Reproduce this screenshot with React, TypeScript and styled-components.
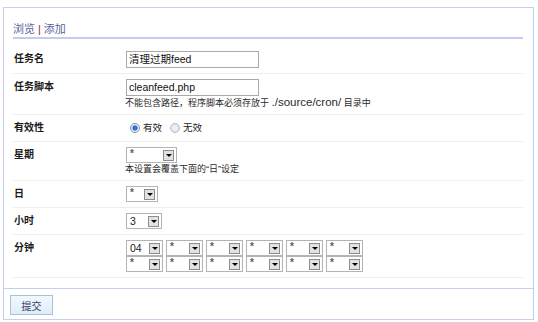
import * as React from 'react';
import styled, { createGlobalStyle } from 'styled-components';

const GlobalStyle = createGlobalStyle`
  html, body {
    margin: 0;
    padding: 0;
    background: #fff;
  }
  body {
    font-family: "Liberation Sans", "Noto Sans CJK SC", sans-serif;
    font-size: 10px;
    color: #222;
  }
`;

const minuteValues = ['04', '*', '*', '*', '*', '*', '*', '*', '*', '*', '*', '*'];

const Select = ({ value, width }: { value: string; width: number }) => (
  <SelectBox $w={width}>
    <SelectValue $star={value === '*'}>{value}</SelectValue>
    <SelectArrow>
      <Triangle />
    </SelectArrow>
  </SelectBox>
);

export default function App() {
  return (
    <>
      <GlobalStyle />
      <Page>
        <Panel>
          <Body>
            <Title>
              <TitleLink>浏览</TitleLink>
              <TitleSep>|</TitleSep>
              <TitleLink>添加</TitleLink>
            </Title>
            <Form>
              <Row>
                <Label>任务名</Label>
                <Value>
                  <TextInput>清理过期feed</TextInput>
                </Value>
              </Row>
              <Row>
                <Label>任务脚本</Label>
                <Value>
                  <TextInput>cleanfeed.php</TextInput>
                  <Hint>
                    不能包含路径，程序脚本必须存放于 <Path>./source/cron/</Path> 目录中
                  </Hint>
                </Value>
              </Row>
              <Row>
                <Label>有效性</Label>
                <Value>
                  <RadioGroup>
                    <RadioItem>
                      <Radio $checked />
                      有效
                    </RadioItem>
                    <RadioItem>
                      <Radio />
                      无效
                    </RadioItem>
                  </RadioGroup>
                </Value>
              </Row>
              <Row>
                <Label>星期</Label>
                <Value>
                  <Select value="*" width={51} />
                  <Hint>本设置会覆盖下面的“日”设定</Hint>
                </Value>
              </Row>
              <Row>
                <Label>日</Label>
                <Value>
                  <Select value="*" width={32} />
                </Value>
              </Row>
              <Row>
                <Label>小时</Label>
                <Value>
                  <Select value="3" width={36} />
                </Value>
              </Row>
              <Row>
                <Label>分钟</Label>
                <Value>
                  <MinuteGrid>
                    {minuteValues.map((v, i) => (
                      <Select key={i} value={v} width={37} />
                    ))}
                  </MinuteGrid>
                </Value>
              </Row>
            </Form>
          </Body>
          <Footer>
            <Submit>提交</Submit>
          </Footer>
        </Panel>
      </Page>
    </>
  );
}

const Page = styled.div`
  padding: 7px 0 0 3px;
`;

const Panel = styled.div`
  width: 529px;
  border: 1px solid #c6cdf3;
`;

const Body = styled.div`
  padding: 0 10px 0 9px;
`;

const Title = styled.div`
  padding-top: 13px;
  font-size: 11px;
  line-height: 16px;
  border-bottom: 2px solid #c3cbf2;
`;

const TitleLink = styled.span`
  color: #5a5f9e;
`;

const TitleSep = styled.span`
  color: #8a2f34;
  margin: 0 3px;
`;

const Form = styled.div`
  margin-top: 7px;
  margin-bottom: 10px;
`;

const Row = styled.div`
  display: grid;
  grid-template-columns: 113px 1fr;
  padding: 5px 0;
  border-bottom: 1px solid #eeeeee;
`;

const Label = styled.div`
  padding-left: 1px;
  font-weight: bold;
  line-height: 16px;
  color: #1a1a1a;
`;

const Value = styled.div`
  line-height: 16px;
`;

const TextInput = styled.div`
  box-sizing: border-box;
  width: 133px;
  height: 17px;
  border: 1px solid #a9a9a9;
  padding: 0 2px;
  font-size: 10.5px;
  line-height: 15px;
  color: #111;
`;

const Hint = styled.div`
  margin-left: -1px;
  font-size: 9px;
  line-height: 12px;
  color: #2a2a2a;
`;

const Path = styled.span`
  font-size: 11.5px;
`;

const RadioGroup = styled.div`
  display: flex;
  align-items: center;
  height: 16px;
  padding-left: 4px;
  gap: 8px;
`;

const RadioItem = styled.span`
  display: inline-flex;
  align-items: center;
  gap: 3px;
  font-size: 9.5px;
  color: #222;
`;

const Radio = styled.span<{ $checked?: boolean }>`
  box-sizing: border-box;
  width: 10px;
  height: 10px;
  border-radius: 50%;
  border: 1px solid ${(p) => (p.$checked ? '#7f93b3' : '#b8bcc4')};
  background: ${(p) =>
    p.$checked
      ? 'radial-gradient(circle, #3f8ae0 0, #1d5fc4 2px, #dfe6f0 3px, #f4f6fa 5px)'
      : 'radial-gradient(circle, #f4f5f7 0, #dcdfe4 5px)'};
`;

const MinuteGrid = styled.div`
  display: grid;
  grid-template-columns: repeat(6, 37px);
  column-gap: 3px;
`;

const SelectBox = styled.span<{ $w: number }>`
  box-sizing: border-box;
  display: inline-flex;
  align-items: center;
  justify-content: space-between;
  width: ${(p) => p.$w}px;
  height: 16px;
  padding: 0 2px 0 3px;
  border: 1px solid #b4b4b4;
  background: #fff;
  vertical-align: top;
`;

const SelectValue = styled.span<{ $star?: boolean }>`
  align-self: ${(p) => (p.$star ? 'flex-start' : 'center')};
  font-size: ${(p) => (p.$star ? '10px' : '10.5px')};
  line-height: ${(p) => (p.$star ? '11px' : '14px')};
  font-weight: ${(p) => (p.$star ? 'bold' : 'normal')};
  color: ${(p) => (p.$star ? '#5a6070' : '#222')};
`;

const SelectArrow = styled.span`
  box-sizing: border-box;
  display: flex;
  align-items: center;
  justify-content: center;
  width: 11px;
  height: 11px;
  border: 1px solid #8d8d8d;
  background: #e2e2e2;
`;

const Triangle = styled.span`
  width: 0;
  height: 0;
  border-left: 3px solid transparent;
  border-right: 3px solid transparent;
  border-top: 3px solid #000;
`;

const Footer = styled.div`
  padding: 6px 6px 4px;
  border-top: 1px solid #c6cdf3;
`;

const Submit = styled.button`
  display: block;
  box-sizing: border-box;
  width: 43px;
  height: 20px;
  padding: 0;
  border: 1px solid #a7c2da;
  background: linear-gradient(#f3f9fd, #deecf8);
  font-family: "Noto Sans CJK SC", sans-serif;
  font-size: 10px;
  color: #3a3f6a;
`;
